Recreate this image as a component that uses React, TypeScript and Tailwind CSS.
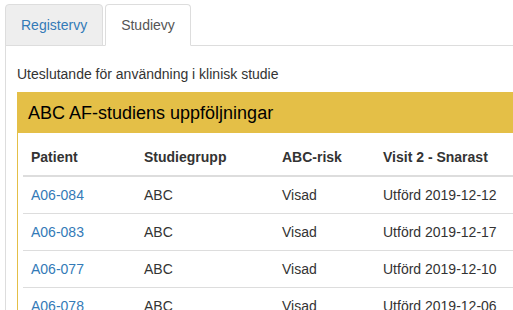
export default function App() {
  const rows = [
    { id: 'A06-084', group: 'ABC', risk: 'Visad', visit: 'Utförd 2019-12-12' },
    { id: 'A06-083', group: 'ABC', risk: 'Visad', visit: 'Utförd 2019-12-17' },
    { id: 'A06-077', group: 'ABC', risk: 'Visad', visit: 'Utförd 2019-12-10' },
    { id: 'A06-078', group: 'ABC', risk: 'Visad', visit: 'Utförd 2019-12-06' },
  ];

  return (
    <div
      className="w-[513px] h-[310px] overflow-hidden bg-white pl-[5px] pt-[4px] text-[14px] leading-[20px] text-[#333]"
      style={{ fontFamily: '"Liberation Sans", Arial, sans-serif' }}
    >
      {/* Tabs */}
      <div className="flex border-b border-[#ddd] w-[600px]">
        <div className="mr-[2px] -mb-px px-[15px] py-[10px] border border-[#ddd] border-b-[#ddd] rounded-t-[4px] bg-[#eee] text-[#337ab7]">
          Registervy
        </div>
        <div className="-mb-px px-[15px] py-[10px] border border-[#ddd] border-b-white rounded-t-[4px] bg-white text-[#555]">
          Studievy
        </div>
      </div>

      {/* Tab pane */}
      <div className="border-l border-[#ddd] pl-[11px] pt-[18px] w-[600px] h-[300px]">
        <p className="mb-[8px]">Uteslutande för användning i klinisk studie</p>

        <div className="border border-[#e4bf47] w-[600px]">
          <div className="bg-[#e4bf47] px-[10px] pt-[10px] pb-[10px] text-[18px] leading-[20px] text-black">
            ABC AF-studiens uppföljningar
          </div>
          <div className="pl-[5px] pt-[6px]">
            <table className="w-[600px] border-collapse text-left">
              <thead>
                <tr className="border-b-2 border-[#ddd]">
                  <th className="w-[113px] p-[8px] font-bold">Patient</th>
                  <th className="w-[138px] p-[8px] font-bold">Studiegrupp</th>
                  <th className="w-[101px] p-[8px] font-bold">ABC-risk</th>
                  <th className="p-[8px] font-bold">Visit 2 - Snarast</th>
                </tr>
              </thead>
              <tbody>
                {rows.map((r) => (
                  <tr key={r.id} className="border-b border-[#ddd]">
                    <td className="p-[8px] text-[#337ab7]">{r.id}</td>
                    <td className="p-[8px]">{r.group}</td>
                    <td className="p-[8px]">{r.risk}</td>
                    <td className="p-[8px]">{r.visit}</td>
                  </tr>
                ))}
              </tbody>
            </table>
          </div>
        </div>
      </div>
    </div>
  );
}
